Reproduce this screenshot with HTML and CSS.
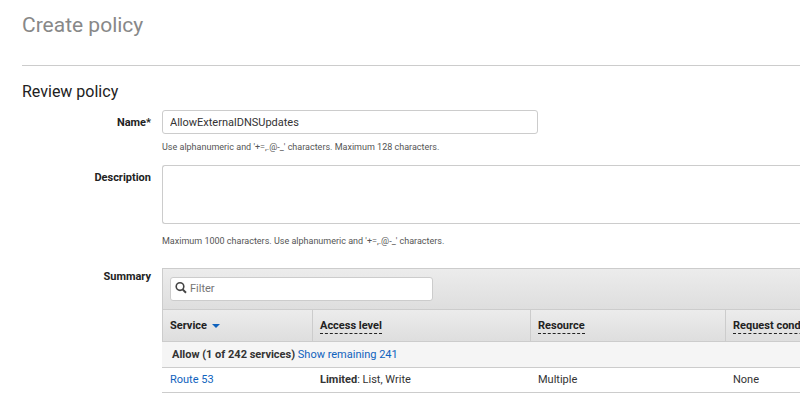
FILE: index.html
```html
<!DOCTYPE html>
<html lang="en">
<head>
  <meta charset="UTF-8">
  <title>Create policy</title>
  <link rel="stylesheet" href="styles.css">
</head>
<body>
<div class="page">
  <h1 class="title">Create policy</h1>
  <h2 class="subtitle">Review policy</h2>
  <form class="form">
    <div class="row">
      <label class="label" for="name">Name*</label>
      <div class="field">
        <input class="text" type="text" id="name" value="AllowExternalDNSUpdates">
        <p class="hint">Use alphanumeric and '+=,.@-_' characters. Maximum 128 characters.</p>
      </div>
    </div>
    <div class="row">
      <label class="label" for="description">Description</label>
      <div class="field">
        <textarea class="area" id="description"></textarea>
        <p class="hint">Maximum 1000 characters. Use alphanumeric and '+=,.@-_' characters.</p>
      </div>
    </div>
    <div class="row summary">
      <label class="label" for="filter">Summary</label>
      <div class="field panel">
        <div class="toolbar">
          <div class="search">
            <svg width="12" height="14" viewBox="0 0 12 14" fill="none" stroke="#444">
              <circle cx="5" cy="4.6" r="3.8" stroke-width="1.6"/>
              <path d="M7.6 7.4l3.4 3.4" stroke-width="2"/>
            </svg>
            <input type="text" id="filter" placeholder="Filter">
          </div>
        </div>
        <table class="table">
          <colgroup>
            <col class="col-service">
            <col class="col-access">
            <col class="col-resource">
            <col>
          </colgroup>
          <thead>
            <tr>
              <th>Service <span class="arrow"></span></th>
              <th><span class="tip">Access level</span></th>
              <th><span class="tip">Resource</span></th>
              <th><span class="tip">Request condition</span></th>
            </tr>
          </thead>
          <tbody>
            <tr class="group">
              <td colspan="4"><b>Allow (1 of 242 services)</b> <a href="#">Show remaining 241</a></td>
            </tr>
            <tr>
              <td><a href="#">Route 53</a></td>
              <td><b>Limited</b>: List, Write</td>
              <td>Multiple</td>
              <td>None</td>
            </tr>
          </tbody>
        </table>
      </div>
    </div>
  </form>
</div>
</body>
</html>
```

FILE: styles.css
```css
* {
  box-sizing: border-box;
  margin: 0;
  padding: 0;
}

body {
  background: #fff;
  color: #333;
  font: 11px/16px Roboto, "Liberation Sans", sans-serif;
}

input,
textarea {
  font: inherit;
  color: #333;
}

a {
  color: #0f62bd;
  text-decoration: none;
}

b {
  font-weight: bold;
}

.page {
  padding-left: 22px;
  overflow: hidden;
}

.title {
  padding: 10px 0 25px;
  border-bottom: 1px solid #ccc;
  color: #888;
  font-size: 21px;
  font-weight: normal;
  line-height: 30px;
}

.subtitle {
  padding: 15px 0 8px;
  color: #222;
  font-size: 16px;
  font-weight: normal;
  line-height: 21px;
}

.row {
  display: flex;
  gap: 11px;
  margin-bottom: 11px;
}

.label {
  flex: none;
  width: 129px;
  padding-top: 5px;
  color: #222;
  font-weight: bold;
  text-align: right;
}

.field {
  flex: 1;
  min-width: 0;
}

.text {
  display: block;
  width: 376px;
  max-width: 100%;
  height: 24px;
  padding: 0 7px;
  border: 1px solid #ccc;
  border-radius: 3px;
}

.area {
  display: block;
  width: 100%;
  height: 59px;
  padding: 7px;
  border: 1px solid #ccc;
  border-right: 0;
  border-radius: 3px 0 0 3px;
  resize: none;
}

.hint {
  padding-top: 6px;
  color: #555;
  font-size: 9px;
  line-height: 14px;
}

.area + .hint {
  padding-top: 10px;
}

.summary {
  padding-top: 9px;
}

.summary .label {
  padding-top: 1px;
}

.panel {
  border-top: 1px solid #ccc;
}

.toolbar {
  padding: 8px 7px;
  border-left: 1px solid #ccc;
  background: linear-gradient(#ececec, #dedede);
}

.search {
  display: flex;
  align-items: center;
  gap: 3px;
  width: 263px;
  height: 24px;
  padding: 0 4px;
  border: 1px solid #ccc;
  border-radius: 3px;
  background: #fff;
}

.search input {
  flex: 1;
  min-width: 0;
  border: 0;
  outline: 0;
  background: none;
}

.search input::placeholder {
  color: #757575;
}

.table {
  width: 100%;
  border-collapse: separate;
  border-spacing: 0;
  table-layout: fixed;
  text-align: left;
  white-space: nowrap;
}

.col-service {
  width: 150px;
}

.col-access {
  width: 218px;
}

.col-resource {
  width: 195px;
}

.table th {
  height: 33px;
  padding: 0 7px;
  border: 1px solid #ccc;
  border-right: 0;
  background: linear-gradient(#ececec, #dedede);
  color: #222;
}

.table th:first-child {
  border-left-color: #ccc;
}

.table td {
  height: 25px;
  padding: 0 8px;
  border-bottom: 1px solid #ccc;
}

.table .group td {
  height: 26px;
  padding: 0 10px;
  background: #f5f5f5;
}

.tip {
  display: inline-block;
  border-bottom: 1px dashed #222;
  line-height: 15px;
}

.arrow {
  display: inline-block;
  margin-left: 2px;
  border: 4px solid transparent;
  border-top-color: #0f62bd;
  border-bottom: 0;
  vertical-align: 1px;
}
```
